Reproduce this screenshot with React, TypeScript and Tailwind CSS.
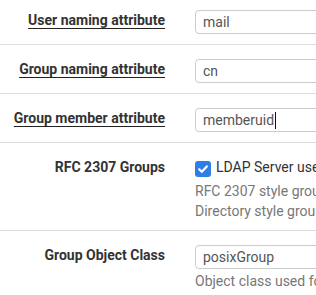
import type { ReactNode } from 'react';

function Row({ label, underline, children, className = '' }: { label: string; underline?: boolean; children: ReactNode; className?: string }) {
  return (
    <div className={`flex border-b border-[#dedede] pt-[14px] ${className}`}>
      <div className="w-[180px] shrink-0 pr-[15px] text-right text-[14px] leading-[20px] font-bold text-[#333]">
        <span className={underline ? 'underline decoration-1 underline-offset-[3px] decoration-[#222]' : ''}>{label}</span>
      </div>
      <div className="flex-1 pl-[15px] text-[14px] leading-[20px]">{children}</div>
    </div>
  );
}

function Field({ value, caret }: { value: string; caret?: boolean }) {
  return (
    <div className="flex h-[24px] w-[640px] items-center rounded-[4px] border border-[#cccccc] bg-white pl-[7px] text-[14px] leading-[22px] text-[#555]">
      <span>{value}</span>
      {caret && <span className="ml-px inline-block h-[17px] w-px bg-[#111]" />}
    </div>
  );
}

export default function App() {
  return (
    <div className="h-[295px] w-full overflow-hidden bg-white" style={{ fontFamily: 'Roboto, "Liberation Sans", sans-serif' }}>
      <div className="-mt-[4px] w-[900px]">
        <Row label="User naming attribute" underline className="pb-[10px]">
          <Field value="mail" />
        </Row>
        <Row label="Group naming attribute" underline className="pb-[10px]">
          <Field value="cn" />
        </Row>
        <Row label="Group member attribute" underline className="pb-[10px]">
          <Field value="memberuid" caret />
        </Row>
        <Row label="RFC 2307 Groups" className="pb-[9px]">
          <div className="flex items-start gap-[5px] text-[#333]">
            <span className="mt-[4px] flex h-[16px] w-[16px] shrink-0 items-center justify-center rounded-[3px] bg-[#2f7ee6]">
              <svg width="12" height="12" viewBox="0 0 12 12" fill="none">
                <path d="M2.2 6.3 4.8 8.8 9.8 3.4" stroke="white" strokeWidth="2.2" strokeLinecap="round" strokeLinejoin="round" />
              </svg>
            </span>
            <span className="whitespace-nowrap">LDAP Server uses RFC 2307 style group membership</span>
          </div>
          <div className="mt-[4px] whitespace-nowrap text-[#777]">
            <div>RFC 2307 style group membership has members listed on the group object rather than using groups listed on user object. Leave unchecked for Active</div>
            <div>Directory style group membership (RFC 2307bis).</div>
          </div>
        </Row>
        <Row label="Group Object Class" className="pb-[10px]">
          <Field value="posixGroup" />
          <div className="mt-[2px] whitespace-nowrap text-[#777]">Object class used for groups in the LDAP server.</div>
        </Row>
      </div>
    </div>
  );
}
